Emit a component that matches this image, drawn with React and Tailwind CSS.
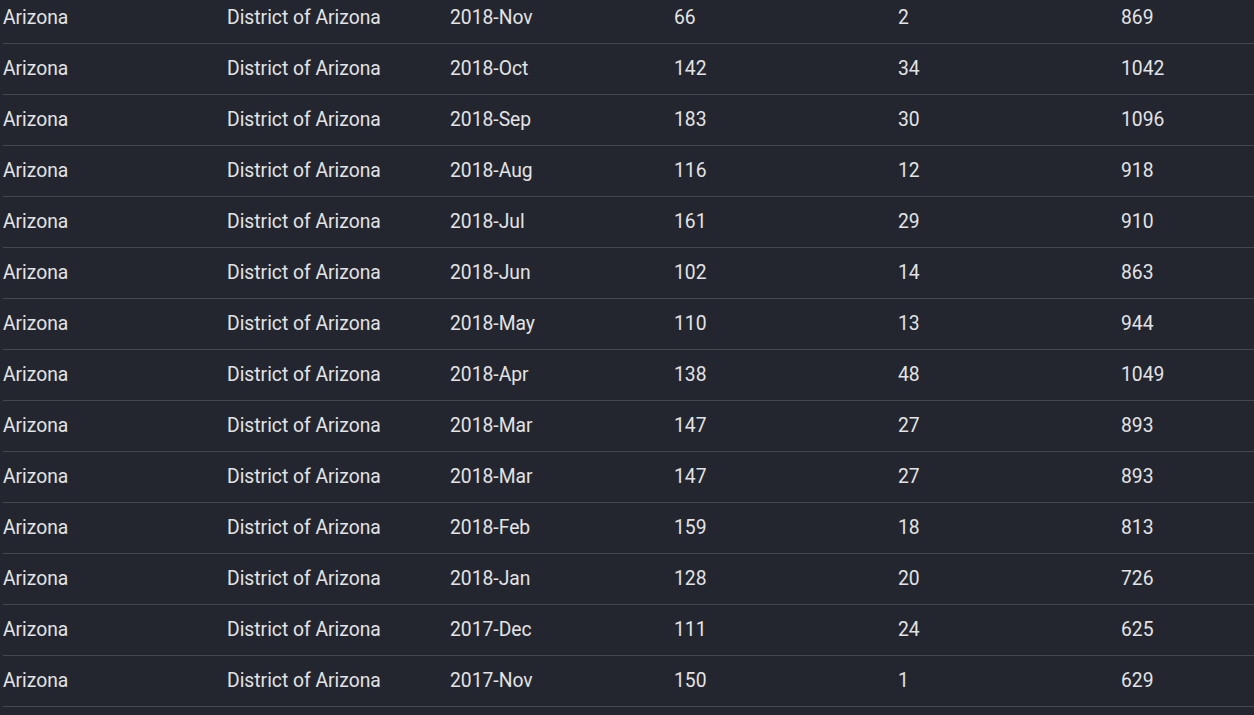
const rows = [
  ['2018-Nov', 66, 2, 869],
  ['2018-Oct', 142, 34, 1042],
  ['2018-Sep', 183, 30, 1096],
  ['2018-Aug', 116, 12, 918],
  ['2018-Jul', 161, 29, 910],
  ['2018-Jun', 102, 14, 863],
  ['2018-May', 110, 13, 944],
  ['2018-Apr', 138, 48, 1049],
  ['2018-Mar', 147, 27, 893],
  ['2018-Mar', 147, 27, 893],
  ['2018-Feb', 159, 18, 813],
  ['2018-Jan', 128, 20, 726],
  ['2017-Dec', 111, 24, 625],
  ['2017-Nov', 150, 1, 629],
];

export default function App() {
  return (
    <div className="h-[715px] w-[1254px] overflow-hidden bg-[#23262e] pl-[3px] font-['Roboto',sans-serif] text-[19.3px] text-[#e2e3e6]">
      <div className="-mt-[7px]">
        {rows.map((r, i) => (
          <div key={i} className="flex h-[51px] items-center border-b border-[#43464d] whitespace-nowrap">
            <div className="w-[224px] shrink-0">Arizona</div>
            <div className="w-[223px] shrink-0">District of Arizona</div>
            <div className="w-[224px] shrink-0">{r[0]}</div>
            <div className="w-[224px] shrink-0">{r[1]}</div>
            <div className="w-[223px] shrink-0">{r[2]}</div>
            <div className="w-[224px] shrink-0">{r[3]}</div>
          </div>
        ))}
      </div>
    </div>
  );
}
